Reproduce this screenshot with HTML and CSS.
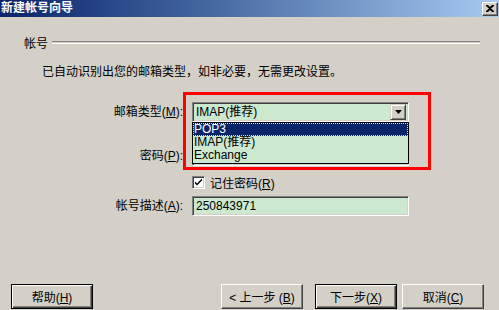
FILE: index.html
```html
<!DOCTYPE html>
<html lang="zh-CN">

<head>
  <meta charset="UTF-8">
  <title>新建帐号向导</title>
  <link rel="stylesheet" href="styles.css">
</head>

<body>

  <div class="window">
    <div class="titlebar">
      <span class="title">新建帐号向导</span>
      <span class="close-btn">
        <svg width="8" height="7" viewBox="0 0 8 7">
          <path d="M0 0h2l2 2 2-2h2v1l-3 2.5 3 2.5v1h-2l-2-2-2 2h-2v-1l3-2.5-3-2.5z" fill="#000" />
        </svg>
      </span>
    </div>

    <div class="group-head">
      <span>帐号</span>
      <span class="group-line"></span>
    </div>

    <div class="intro">已自动识别出您的邮箱类型，如非必要，无需更改设置。</div>

    <div class="form">
      <div class="form-row row-combo">
        <label class="label">邮箱类型(<u>M</u>):</label>
        <div class="field combo">
          <span>IMAP(推荐)</span>
          <span class="drop-btn">
            <svg width="7" height="4" viewBox="0 0 7 4">
              <path d="M0 0h7l-3.5 4z" fill="#000" />
            </svg>
          </span>
        </div>
      </div>

      <div class="form-row row-pass">
        <label class="label">密码(<u>P</u>):</label>
        <div class="field"></div>
      </div>

      <div class="form-row row-check">
        <span></span>
        <div class="check-line">
          <span class="checkbox">
            <svg width="9" height="9" viewBox="0 0 9 9">
              <path d="M1 3.5l2 2 5-5v2l-5 5-2-2z" fill="#000" />
            </svg>
          </span>
          <span>记住密码(<u>R</u>)</span>
        </div>
      </div>

      <div class="form-row row-desc">
        <label class="label">帐号描述(<u>A</u>):</label>
        <div class="field">250843971</div>
      </div>
    </div>

    <div class="footer">
      <button class="btn default">帮助(<u>H</u>)</button>
      <span class="spacer"></span>
      <button class="btn">&lt; 上一步 (<u>B</u>)</button>
      <button class="btn default next">下一步(<u>X</u>)</button>
      <button class="btn cancel">取消(<u>C</u>)</button>
    </div>

    <!-- 下拉列表，展开后盖住密码框 -->
    <ul class="drop-list">
      <li class="selected">POP3</li>
      <li>IMAP(推荐)</li>
      <li>Exchange</li>
    </ul>

    <!-- 红框标注 -->
    <div class="mark"></div>
  </div>

</body>

</html>
```

FILE: styles.css
```css
html,
body {
  margin: 0;
  padding: 0;
  background-color: #d4d0c8;
}

.window {
  position: relative;
  width: 499px;
  height: 310px;
  background-color: #d4d0c8;
  display: flex;
  flex-direction: column;
  font-family: "Liberation Sans", "Noto Sans CJK SC", sans-serif;
  font-size: 12px;
  color: #000;
  overflow: hidden;
}

.titlebar {
  flex: none;
  height: 17px;
  display: flex;
  justify-content: space-between;
  align-items: center;
  background: linear-gradient(to right, #0a246a, #3a5c98 35%, #a6caf0);
}

.title {
  padding-left: 1px;
  color: #fff;
  font-weight: bold;
  line-height: 17px;
}

.close-btn {
  width: 14px;
  height: 12px;
  margin-right: 1px;
  display: flex;
  align-items: center;
  justify-content: center;
  background-color: #d4d0c8;
  border: 1px solid;
  border-color: #fff #404040 #404040 #fff;
  box-shadow: inset -1px -1px #808080;
}

.group-head {
  flex: none;
  display: flex;
  align-items: center;
  margin-top: 18px;
  padding-left: 24px;
  padding-right: 19px;
  height: 14px;
}

.group-line {
  flex: 1;
  margin-left: 4px;
  height: 1px;
  border-top: 1px solid #808080;
  border-bottom: 1px solid #fff;
}

.intro {
  flex: none;
  margin-top: 16px;
  padding-left: 42px;
  height: 14px;
  line-height: 14px;
}

.form {
  flex: none;
  margin-top: 23px;
  display: flex;
  flex-direction: column;
}

.form-row {
  display: grid;
  grid-template-columns: 183px 217px;
  column-gap: 9px;
  align-items: center;
  height: 20px;
}

.row-pass {
  margin-top: 24px;
}

.row-check {
  margin-top: 10px;
  height: 13px;
}

.row-desc {
  margin-top: 7px;
}

.label {
  text-align: right;
  line-height: 20px;
}

.field {
  box-sizing: border-box;
  height: 20px;
  padding: 2px 3px;
  background-color: #cce8cf;
  border: 1px solid;
  border-color: #808080 #fff #fff #808080;
  box-shadow: inset 1px 1px #404040, inset -1px -1px #d4d0c8;
  line-height: 15px;
}

.combo {
  display: flex;
  justify-content: space-between;
  align-items: center;
  padding: 0 2px 0 3px;
}

.drop-btn {
  box-sizing: border-box;
  width: 16px;
  height: 16px;
  display: flex;
  align-items: center;
  justify-content: center;
  background-color: #d4d0c8;
  border: 1px solid;
  border-color: #d4d0c8 #404040 #404040 #d4d0c8;
  box-shadow: inset 1px 1px #fff, inset -1px -1px #808080;
}

.check-line {
  display: flex;
  align-items: center;
  gap: 5px;
  height: 13px;
}

.checkbox {
  box-sizing: border-box;
  width: 13px;
  height: 13px;
  display: flex;
  align-items: center;
  justify-content: center;
  background-color: #fff;
  border: 1px solid;
  border-color: #808080 #fff #fff #808080;
  box-shadow: inset 1px 1px #404040, inset -1px -1px #d4d0c8;
}

.footer {
  margin-top: auto;
  margin-bottom: 1px;
  display: flex;
  padding-left: 11px;
  padding-right: 15px;
}

.spacer {
  flex: 1;
}

.btn {
  box-sizing: border-box;
  width: 82px;
  height: 25px;
  padding: 0;
  font-family: inherit;
  font-size: 12px;
  color: #000;
  background-color: #d4d0c8;
  border: 1px solid;
  border-color: #fff #404040 #404040 #fff;
  box-shadow: inset -1px -1px #808080;
}

.btn.default {
  border-color: #000;
  box-shadow: inset 1px 1px #fff, inset -1px -1px #404040, inset -2px -2px #808080;
}

.btn.next {
  margin-left: 12px;
}

.btn.cancel {
  margin-left: 5px;
}

.drop-list {
  position: absolute;
  left: 192px;
  top: 122px;
  width: 217px;
  height: 42px;
  box-sizing: border-box;
  margin: 0;
  padding: 0;
  list-style: none;
  background-color: #cce8cf;
  border: 1px solid #000;
}

.drop-list li {
  height: 13px;
  line-height: 13px;
  padding-left: 1px;
}

.drop-list li.selected {
  background-color: #0a246a;
  color: #fff;
  outline: 1px dotted #e8e8a0;
  outline-offset: -1px;
}

.mark {
  position: absolute;
  left: 183px;
  top: 92px;
  width: 248px;
  height: 78px;
  box-sizing: border-box;
  border: 3px solid #f00;
}
```
